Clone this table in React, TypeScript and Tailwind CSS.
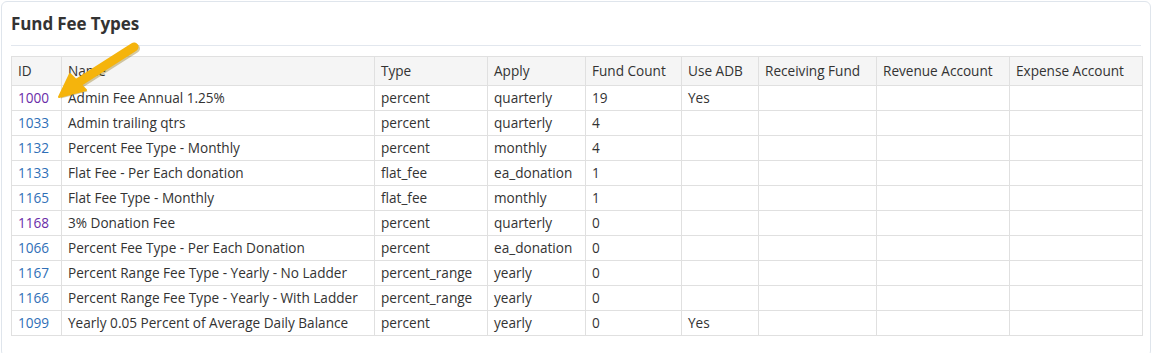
import React from "react";

const rows: { id: string; visited?: boolean; name: string; type: string; apply: string; count: string; adb?: string }[] = [
  { id: "1000", visited: true, name: "Admin Fee Annual 1.25%", type: "percent", apply: "quarterly", count: "19", adb: "Yes" },
  { id: "1033", name: "Admin trailing qtrs", type: "percent", apply: "quarterly", count: "4" },
  { id: "1132", name: "Percent Fee Type - Monthly", type: "percent", apply: "monthly", count: "4" },
  { id: "1133", name: "Flat Fee - Per Each donation", type: "flat_fee", apply: "ea_donation", count: "1" },
  { id: "1165", name: "Flat Fee Type - Monthly", type: "flat_fee", apply: "monthly", count: "1" },
  { id: "1168", visited: true, name: "3% Donation Fee", type: "percent", apply: "quarterly", count: "0" },
  { id: "1066", name: "Percent Fee Type - Per Each Donation", type: "percent", apply: "ea_donation", count: "0" },
  { id: "1167", name: "Percent Range Fee Type - Yearly - No Ladder", type: "percent_range", apply: "yearly", count: "0" },
  { id: "1166", name: "Percent Range Fee Type - Yearly - With Ladder", type: "percent_range", apply: "yearly", count: "0" },
  { id: "1099", name: "Yearly 0.05 Percent of Average Daily Balance", type: "percent", apply: "yearly", count: "0", adb: "Yes" },
];

const widths = [50, 313, 113, 98, 96, 77, 118, 133, 133];
const headers = ["ID", "Name", "Type", "Apply", "Fund Count", "Use ADB", "Receiving Fund", "Revenue Account", "Expense Account"];

export default function App() {
  return (
    <div className="w-[1152px] h-[353px] bg-white pl-px pt-px overflow-hidden" style={{ fontFamily: '"Open Sans", "Noto Sans", sans-serif' }}>
      <div className="relative w-[1150px] h-[356px] rounded-[6px] border border-[#dfe5ec] px-[9px] pt-[10px] text-[#333]">
        <h2 className="text-[17px] leading-[23px] font-bold text-[#333] tracking-[-0.1px]">Fund Fee Types</h2>
        <div className="mt-[10px] h-px bg-[#e2e7ee] w-[1130px]" />
        <table className="mt-[10px] table-fixed border-collapse w-[1131px] text-[13.6px]">
          <colgroup>
            {widths.map((w, i) => (
              <col key={i} style={{ width: w }} />
            ))}
          </colgroup>
          <thead>
            <tr className="bg-[#f5f5f5] h-[29px]">
              {headers.map((h) => (
                <th key={h} className="border border-[#e0e0e0] px-[6px] py-0 text-left font-normal whitespace-nowrap">
                  {h}
                </th>
              ))}
            </tr>
          </thead>
          <tbody>
            {rows.map((r) => (
              <tr key={r.id} className="h-[25px]">
                <td className={`border border-[#e0e0e0] px-[6px] py-0 ${r.visited ? "text-[#6a2ca8]" : "text-[#2f6fb7]"}`}>{r.id}</td>
                <td className="border border-[#e0e0e0] px-[6px] py-0 whitespace-nowrap">{r.name}</td>
                <td className="border border-[#e0e0e0] px-[6px] py-0">{r.type}</td>
                <td className="border border-[#e0e0e0] px-[6px] py-0">{r.apply}</td>
                <td className="border border-[#e0e0e0] px-[6px] py-0">{r.count}</td>
                <td className="border border-[#e0e0e0] px-[6px] py-0">{r.adb ?? ""}</td>
                <td className="border border-[#e0e0e0] px-[6px] py-0"></td>
                <td className="border border-[#e0e0e0] px-[6px] py-0"></td>
                <td className="border border-[#e0e0e0] px-[6px] py-0"></td>
              </tr>
            ))}
          </tbody>
        </table>
        <svg className="absolute left-[46px] top-[39px]" width="100" height="66" viewBox="0 0 100 66">
          <g transform="translate(1.5,1.5)" fill="#8a6a00" opacity="0.35">
            <path d="M86 6 L28 43" stroke="#8a6a00" strokeWidth="9" strokeLinecap="round" fill="none" />
            <path d="M11 56 L22 33 L38 49 Z" />
          </g>
          <path d="M86 6 L28 43" stroke="#f5b40c" strokeWidth="9" strokeLinecap="round" fill="none" />
          <path d="M11 56 L22 33 L38 49 Z" fill="#f5b40c" stroke="#f5b40c" strokeWidth="2" strokeLinejoin="round" />
        </svg>
      </div>
    </div>
  );
}
